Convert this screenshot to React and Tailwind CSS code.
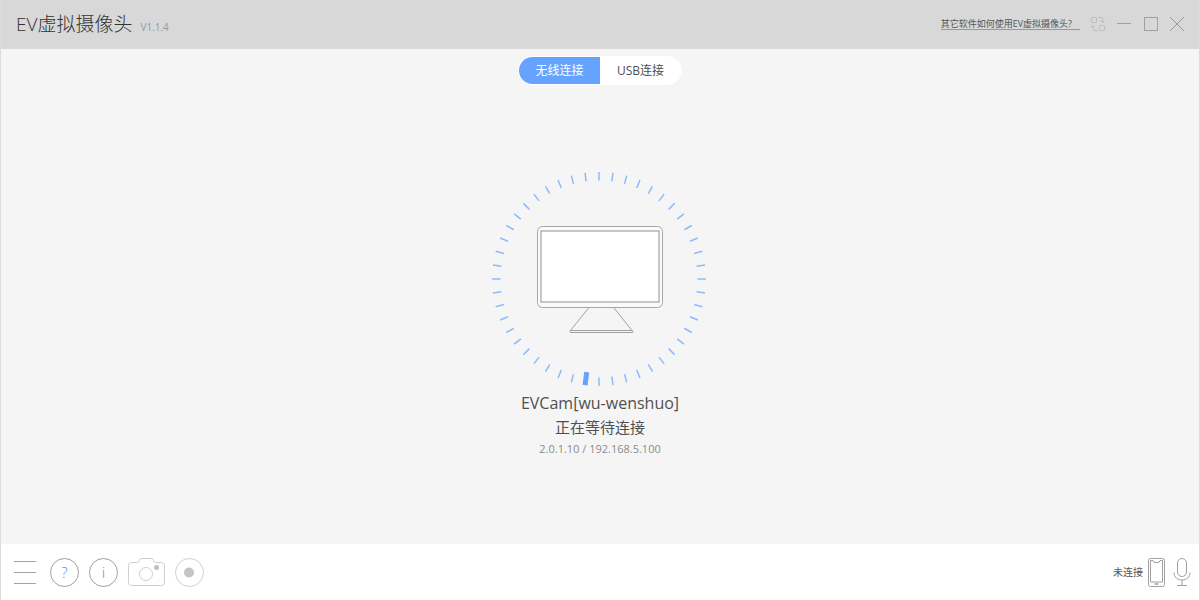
import { useState } from "react";

const TICK_COUNT = 48;
const ACTIVE_TICK = 25;

const tabs = [
  { id: "wireless", name: "无线连接" },
  { id: "usb", name: "USB连接" },
];

function TitleBar() {
  return (
    <header className="flex h-[49px] items-center justify-between bg-[#d8d8d8] pr-[13px] pb-px pl-[15px]">
      <div className="flex items-baseline gap-2">
        <h1 className="text-[19px] font-light text-[#333]">EV虚拟摄像头</h1>
        <span className="text-[10px] text-[#999]">V1.1.4</span>
      </div>

      <div className="flex items-center gap-2">
        <a
          href="#help"
          className="border-b border-[#999] pr-2 text-[9px] leading-[10px] text-[#555]"
        >
          其它软件如何使用EV虚拟摄像头?
        </a>
        <button type="button" aria-label="切换设备">
          <svg className="block" width="20" height="20" viewBox="0 0 20 20" fill="none" stroke="#bcbcbc">
            <rect x="3.5" y="3.5" width="5" height="5" rx="1" />
            <rect x="11.5" y="11.5" width="5" height="5" rx="1" />
            <path d="M10.5 3.5h2.500q2 0 2 2v3M12.500 6.500l2 2 2-2" />
            <path d="M9.5 16.5h-2.500q-2 0-2-2v-3M2.500 13.500l2-2 2 2" />
          </svg>
        </button>
        <button type="button" aria-label="最小化">
          <svg className="block" width="18" height="18" viewBox="0 0 18 18" stroke="#a0a0a0">
            <path d="M1 8.5h14" />
          </svg>
        </button>
        <button type="button" aria-label="最大化">
          <svg className="block" width="18" height="18" viewBox="0 0 18 18" fill="none" stroke="#a0a0a0">
            <rect x="2.5" y="2.5" width="13" height="13" />
          </svg>
        </button>
        <button type="button" aria-label="关闭">
          <svg className="block" width="18" height="18" viewBox="0 0 18 18" stroke="#999">
            <path d="M2 2l14 14M16 2L2 16" />
          </svg>
        </button>
      </div>
    </header>
  );
}

function WaitingDial() {
  return (
    <svg width="216" height="216" viewBox="0 0 216 216" fill="none" aria-hidden="true">
      {Array.from({ length: TICK_COUNT }, (_, i) => {
        const active = i === ACTIVE_TICK;

        return (
          <line
            key={i}
            x1="107"
            x2="107"
            y1="1"
            y2={active ? 14 : 9.5}
            stroke={active ? "#66a3ff" : "#8cbaff"}
            strokeWidth={active ? 5 : 1.5}
            transform={`rotate(${(i * 360) / TICK_COUNT} 107 108)`}
          />
        );
      })}

      {/* Monitor */}
      <rect x="45.5" y="55.5" width="125" height="81" rx="5" fill="#fafafa" stroke="#a6a6a6" />
      <rect x="49" y="60" width="118" height="71" fill="#fff" stroke="#b4b4b4" strokeWidth="1.5" />
      <path d="M96.5 137L78.5 159.5M122 137L140 159.5" stroke="#a0a0a0" />
      <path d="M79 159.5h61q1 0 1 1t-1 1H79q-1 0-1-1t1-1z" stroke="#a0a0a0" />
    </svg>
  );
}

function StatusBar() {
  return (
    <footer className="flex h-14 items-center justify-between bg-white pr-2 pl-[13px]">
      <div className="flex items-center gap-[10px]">
        <button type="button" aria-label="菜单" className="mr-1">
          <svg className="block" width="22" height="30" viewBox="0 0 22 30" stroke="#a3a3a3">
            <path d="M0 4.5h22M0 15.5h22M0 26.5h22" />
          </svg>
        </button>
        <button
          type="button"
          aria-label="帮助"
          className="flex size-[29px] items-center justify-center rounded-full border border-[#a0a0a0] text-[15px] font-light text-[#4a92ff]"
        >
          ?
        </button>
        <button
          type="button"
          aria-label="关于"
          className="flex size-[29px] items-center justify-center rounded-full border border-[#a0a0a0] text-[15px] font-light text-[#4a92ff]"
        >
          i
        </button>
        <button type="button" aria-label="拍照">
          <svg className="block" width="37" height="30" viewBox="0 0 37 30" fill="none" stroke="#cfcfcf">
            <path d="M3.5 5.5h6q1.5 0 2-2t2-2h10q1.5 0 2 2t2 2h6q3 0 3 3v17q0 3-3 3h-30q-3 0-3-3v-17q0-3 3-3z" />
            <circle cx="18" cy="17" r="6.5" />
            <circle cx="28.5" cy="10.5" r="2.5" fill="#c0c0c0" stroke="none" />
          </svg>
        </button>
        <button type="button" aria-label="录制">
          <svg className="block" width="29" height="29" viewBox="0 0 29 29" fill="none">
            <circle cx="14.5" cy="14.5" r="14" stroke="#cfcfcf" />
            <circle cx="14" cy="14.5" r="5" fill="#c4c4c4" />
          </svg>
        </button>
      </div>

      <div className="flex items-center gap-1">
        <span className="text-[10px] text-[#555]">未连接</span>
        <svg width="18" height="30" viewBox="0 0 18 30" fill="none" stroke="#a0a0a0">
          <rect x="1.5" y="1.5" width="16" height="28" rx="2" />
          <path d="M3.5 3.5h2.5q.5 2 2 2h3q1.5 0 2-2h2.5v21.5h-12z" />
          <path d="M7.5 27h4" strokeWidth="1.5" />
        </svg>
        <svg className="ml-1" width="18" height="30" viewBox="0 0 18 30" fill="none" stroke="#a0a0a0">
          <rect x="4.5" y="1.5" width="9" height="18" rx="4.5" />
          <path d="M1 15.5c0 5 3.5 7.5 8 7.5s8-2.5 8-7.5M9 23v5M4 28.5h10" />
        </svg>
      </div>
    </footer>
  );
}

function App() {
  const [activeTab, setActiveTab] = useState("wireless");

  return (
    <div className="flex min-h-screen flex-col border-x border-[#dcdcdc] bg-[#f5f5f5] font-['Open_Sans','Noto_Sans_CJK_SC',sans-serif]">
      <TitleBar />

      <main className="flex flex-1 flex-col items-center pt-[7px]">
        <div className="flex overflow-hidden rounded-full border border-white bg-white">
          {tabs.map((tab) => (
            <button
              key={tab.id}
              type="button"
              aria-pressed={activeTab === tab.id}
              onClick={() => setActiveTab(tab.id)}
              className={`h-[27px] w-[81px] text-[12px] ${
                activeTab === tab.id ? "bg-[#66a3ff] text-white" : "text-[#505050]"
              }`}
            >
              {tab.name}
            </button>
          ))}
        </div>

        <section className="flex flex-1 flex-col items-center justify-center">
          <WaitingDial />
          <p className="mt-1 text-[16px] leading-6 text-[#505050]">EVCam[wu-wenshuo]</p>
          <p className="text-[15px] leading-6 text-[#505050]">正在等待连接</p>
          <p className="text-[11px] leading-5 text-[#8c8c8c]">2.0.1.10 / 192.168.5.100</p>
        </section>
      </main>

      <StatusBar />
    </div>
  );
}

export default App;
